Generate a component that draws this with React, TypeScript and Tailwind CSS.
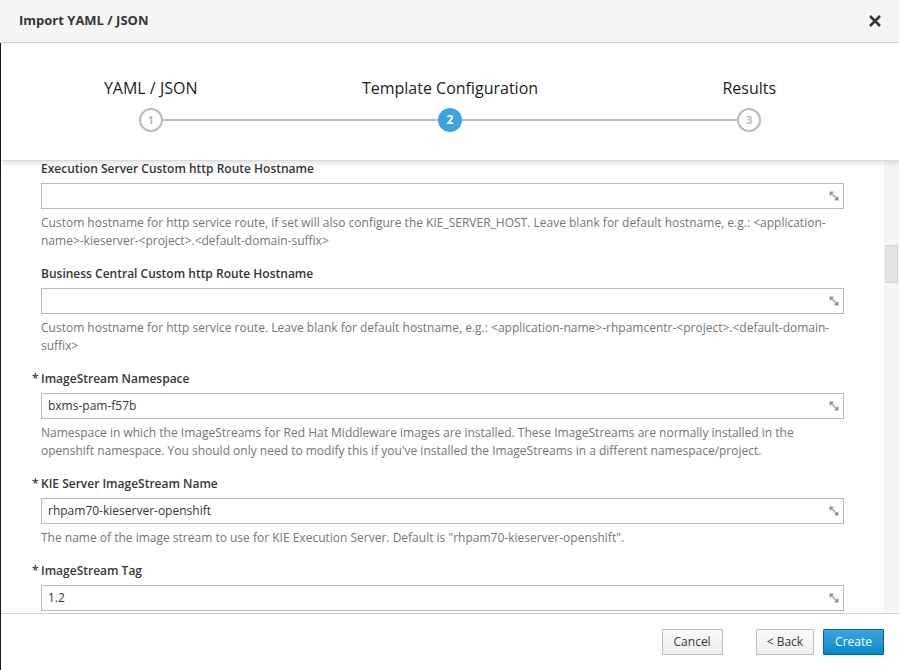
import React from "react";

const FONT = { fontFamily: '"Open Sans", "Noto Sans", sans-serif' };

function ResizeGrip() {
  return (
    <svg width="12" height="12" viewBox="0 0 12 12" className="shrink-0" aria-hidden>
      <path d="M2.5 2.5 L9.5 9.5" stroke="#9aa1ab" strokeWidth="1.4" />
      <path d="M1.5 1.5 L6 1.8 L1.8 6 Z" fill="#8c8f94" />
      <path d="M10.5 10.5 L6 10.2 L10.2 6 Z" fill="#6f8fb5" />
    </svg>
  );
}

type Field = { label: string; required?: boolean; value?: string; help?: string };

const FIELDS: Field[] = [
  {
    label: "Execution Server Custom http Route Hostname",
    help: "Custom hostname for http service route, if set will also configure the KIE_SERVER_HOST. Leave blank for default hostname, e.g.: <application-name>-kieserver-<project>.<default-domain-suffix>",
  },
  {
    label: "Business Central Custom http Route Hostname",
    help: "Custom hostname for http service route. Leave blank for default hostname, e.g.: <application-name>-rhpamcentr-<project>.<default-domain-suffix>",
  },
  {
    label: "ImageStream Namespace",
    required: true,
    value: "bxms-pam-f57b",
    help: "Namespace in which the ImageStreams for Red Hat Middleware images are installed. These ImageStreams are normally installed in the openshift namespace. You should only need to modify this if you've installed the ImageStreams in a different namespace/project.",
  },
  {
    label: "KIE Server ImageStream Name",
    required: true,
    value: "rhpam70-kieserver-openshift",
    help: 'The name of the image stream to use for KIE Execution Server. Default is "rhpam70-kieserver-openshift".',
  },
  { label: "ImageStream Tag", required: true, value: "1.2" },
];

function FormField({ f }: { f: Field }) {
  return (
    <div className="mb-[15px]">
      <div className="flex h-[18px] items-center text-[12px] font-semibold leading-[18px] text-[#363636]">
        {f.required && <span className="-ml-[9px] w-[9px]">*</span>}
        {f.label}
      </div>
      <div className="mt-[5px] flex h-[26px] items-center border border-[#bababa] bg-white pl-[6px] pr-[3px] text-[12px] text-[#363636]">
        <span className="flex-1">{f.value}</span>
        <ResizeGrip />
      </div>
      {f.help && <p className="mt-[5px] text-[12px] leading-[18px] text-[#72767b]">{f.help}</p>}
    </div>
  );
}

function Step({ n, label, active, first, last }: { n: number; label: string; active?: boolean; first?: boolean; last?: boolean }) {
  return (
    <div className="flex flex-col items-center">
      <div className="h-[22px] text-[16px] leading-[22px] text-[#1d1d1d]">{label}</div>
      <div className="mt-[9px] flex w-full items-center">
        <div className={`h-[2px] flex-1 ${first ? "" : "bg-[#bbbbbb]"}`} />
        {active ? (
          <div className="flex h-[24px] w-[24px] items-center justify-center rounded-full bg-[#39a5dc] text-[12px] font-bold text-white">
            {n}
          </div>
        ) : (
          <div className="flex h-[24px] w-[24px] items-center justify-center rounded-full border-2 border-[#bbbbbb] bg-white text-[11px] font-bold text-[#bbbbbb]">
            {n}
          </div>
        )}
        <div className={`h-[2px] flex-1 ${last ? "" : "bg-[#bbbbbb]"}`} />
      </div>
    </div>
  );
}

export default function App() {
  return (
    <div className="flex h-[670px] w-[899px] flex-col overflow-hidden bg-white" style={FONT}>
      <div className="flex h-[43px] shrink-0 items-center border-b border-[#d1d1d1] bg-[#f5f5f5] pl-[19px] pr-[17px]">
        <h4 className="flex-1 text-[13px] font-bold text-[#363636]">Import YAML / JSON</h4>
        <svg width="14" height="14" viewBox="0 0 14 14" aria-hidden>
          <path d="M2 2 L12 12 M12 2 L2 12" stroke="#363636" strokeWidth="2.6" />
        </svg>
      </div>
      <div className="flex min-h-0 flex-1 flex-col border-l border-[#1a1a1a]">
        <div className="relative z-10 grid h-[118px] shrink-0 grid-cols-3 border-b border-[#d9d9d9] bg-white pt-[34px] shadow-[0_3px_5px_rgba(0,0,0,0.1)]">
          <Step n={1} label="YAML / JSON" first />
          <Step n={2} label="Template Configuration" active />
          <Step n={3} label="Results" last />
        </div>
        <div className="flex min-h-0 flex-1">
          <div className="flex-1 overflow-hidden pl-[40px] pr-[40px]">
            <div className="-mt-[1px]">
              {FIELDS.map((f) => (
                <FormField key={f.label} f={f} />
              ))}
            </div>
          </div>
          <div className="w-[15px] shrink-0 bg-[#f5f5f5] pl-[1px]">
            <div className="mt-[84px] h-[38px] w-[13px] border border-[#d4d4d4] bg-[#e3e3e3]" />
          </div>
        </div>
        <div className="flex h-[57px] shrink-0 items-center justify-end border-t border-[#d1d1d1] bg-white pr-[15px] text-[12px] text-[#363636]">
          <button className="h-[26px] rounded-[1px] border border-[#bbbbbb] bg-gradient-to-b from-[#fafafa] to-[#ededed] px-[11px]">
            Cancel
          </button>
          <button className="ml-[33px] h-[26px] rounded-[1px] border border-[#bbbbbb] bg-gradient-to-b from-[#fafafa] to-[#ededed] px-[10px]">
            &lt; Back
          </button>
          <button className="ml-[9px] h-[26px] rounded-[1px] border border-[#00659c] bg-gradient-to-b from-[#39a5dc] to-[#0088ce] px-[11px] text-white">
            Create
          </button>
        </div>
      </div>
    </div>
  );
}
